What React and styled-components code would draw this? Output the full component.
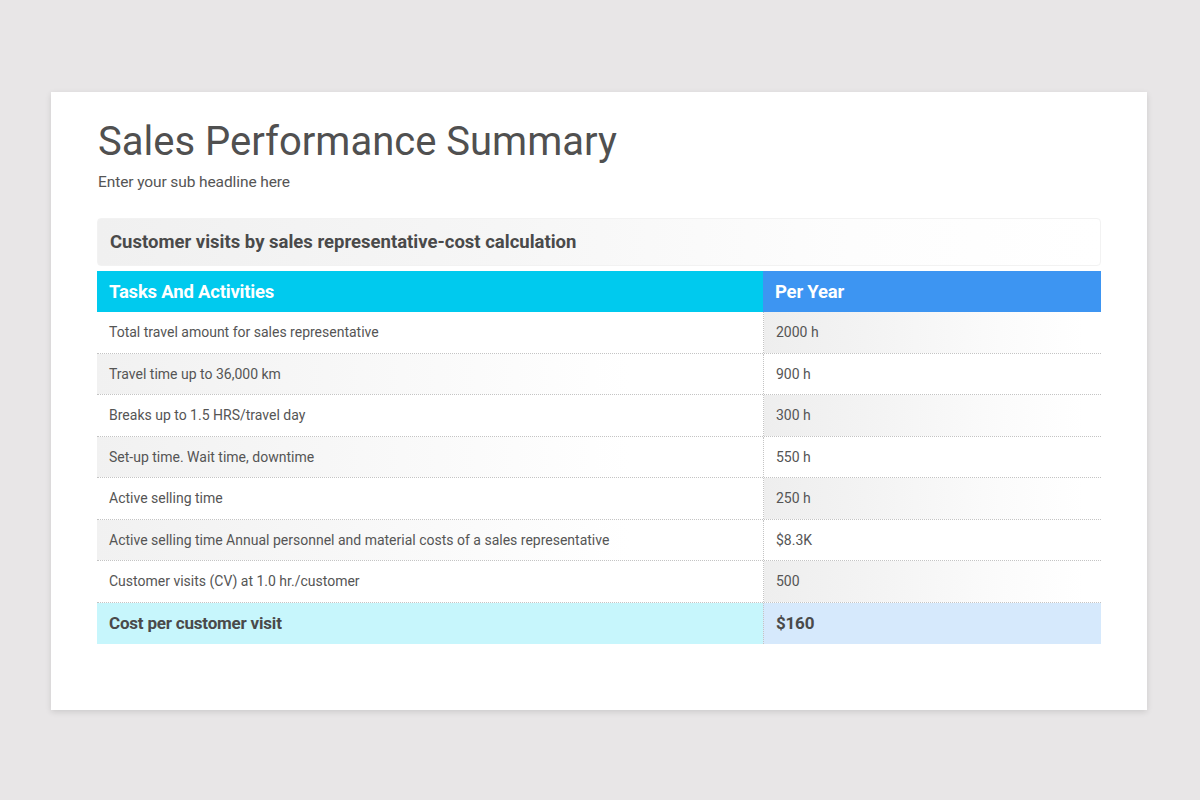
import styled, { createGlobalStyle } from "styled-components";

const GlobalStyle = createGlobalStyle`
  html, body {
    margin: 0;
    padding: 0;
    background: #e8e6e7;
    font-family: Roboto, "Liberation Sans", sans-serif;
  }
`;

const rows = [
  { task: "Total travel amount for sales representative", value: "2000 h" },
  { task: "Travel time up to 36,000 km", value: "900 h" },
  { task: "Breaks up to 1.5 HRS/travel day", value: "300 h" },
  { task: "Set-up time. Wait time, downtime", value: "550 h" },
  { task: "Active selling time", value: "250 h" },
  {
    task: "Active selling time Annual personnel and material costs of a sales representative",
    value: "$8.3K",
  },
  { task: "Customer visits (CV) at 1.0 hr./customer", value: "500" },
];

const App = () => {
  return (
    <>
      <GlobalStyle />
      <Page>
        <Card>
          <Title>Sales Performance Summary</Title>
          <SubTitle>Enter your sub headline here</SubTitle>
          <Caption>Customer visits by sales representative-cost calculation</Caption>
          <Table>
            <HeadRow>
              <HeadCell>Tasks And Activities</HeadCell>
              <HeadCell $blue>Per Year</HeadCell>
            </HeadRow>
            {rows.map((row, i) => (
              <Row key={row.task}>
                <TaskCell $shade={i % 2 === 1}>{row.task}</TaskCell>
                <ValueCell $shade={i % 2 === 0}>{row.value}</ValueCell>
              </Row>
            ))}
            <TotalRow>
              <TotalCell>Cost per customer visit</TotalCell>
              <TotalCell $blue>$160</TotalCell>
            </TotalRow>
          </Table>
        </Card>
      </Page>
    </>
  );
};

const Page = styled.div`
  width: 1200px;
  height: 800px;
  padding: 92px 53px 0 51px;
  box-sizing: border-box;
`;

const Card = styled.div`
  background: #fff;
  height: 618px;
  box-sizing: border-box;
  padding: 26px 46px 0 46px;
  box-shadow: 0 2px 6px rgba(0, 0, 0, 0.12);
`;

const Title = styled.h1`
  margin: 0;
  font-weight: 400;
  font-size: 40px;
  line-height: 48px;
  color: #505050;
  padding-left: 1px;
`;

const SubTitle = styled.div`
  margin-top: 7px;
  font-size: 15.5px;
  line-height: 18px;
  color: #555;
  letter-spacing: -0.1px;
  padding-left: 1px;
`;

const Caption = styled.div`
  margin-top: 27px;
  height: 48px;
  display: flex;
  align-items: center;
  padding: 0 12px;
  border-radius: 4px;
  font-size: 18.5px;
  font-weight: 700;
  color: #4a4a4a;
  box-sizing: border-box;
  background: linear-gradient(90deg, #f0f0f0 0%, #f6f6f6 40%, #fdfdfd 75%, #fff 100%);
  border: 1px solid #f2f2f2;
`;

const Table = styled.div`
  margin-top: 5px;
  display: flex;
  flex-direction: column;
`;

const Grid = styled.div`
  display: grid;
  grid-template-columns: 666px 338px;
`;

const HeadRow = styled(Grid)`
  height: 41px;
`;

const HeadCell = styled.div`
  display: flex;
  align-items: center;
  padding: 0 12px;
  color: #fff;
  font-size: 18.5px;
  font-weight: 700;
  letter-spacing: -0.2px;
  background: ${(p) => (p.$blue ? "#3d95f2" : "#00caee")};
`;

const Row = styled(Grid)`
  height: 41.5px;
  border-bottom: 1px dotted #c4c4c4;
  box-sizing: border-box;
`;

const Cell = styled.div`
  display: flex;
  align-items: center;
  padding: 0 12px;
  font-size: 14px;
  color: #555;
`;

const TaskCell = styled(Cell)`
  background: ${(p) =>
    p.$shade
      ? "linear-gradient(90deg, #f1f1f1 0%, #f8f8f8 40%, #fff 80%)"
      : "#fff"};
`;

const ValueCell = styled(Cell)`
  border-left: 1px dotted #c4c4c4;
  background: ${(p) =>
    p.$shade
      ? "linear-gradient(90deg, #eeeeee 0%, #f3f3f3 30%, #fbfbfb 70%, #fff 95%)"
      : "#fff"};
`;

const TotalRow = styled(Grid)`
  height: 41px;
`;

const TotalCell = styled.div`
  display: flex;
  align-items: center;
  padding: 0 12px;
  font-size: 17px;
  font-weight: 700;
  color: #4a4a4a;
  letter-spacing: -0.2px;
  background: ${(p) => (p.$blue ? "#d6e9fc" : "#c7f6fc")};
  ${(p) => p.$blue && "border-left: 1px dotted #c4c4c4;"}
`;

export default App;
